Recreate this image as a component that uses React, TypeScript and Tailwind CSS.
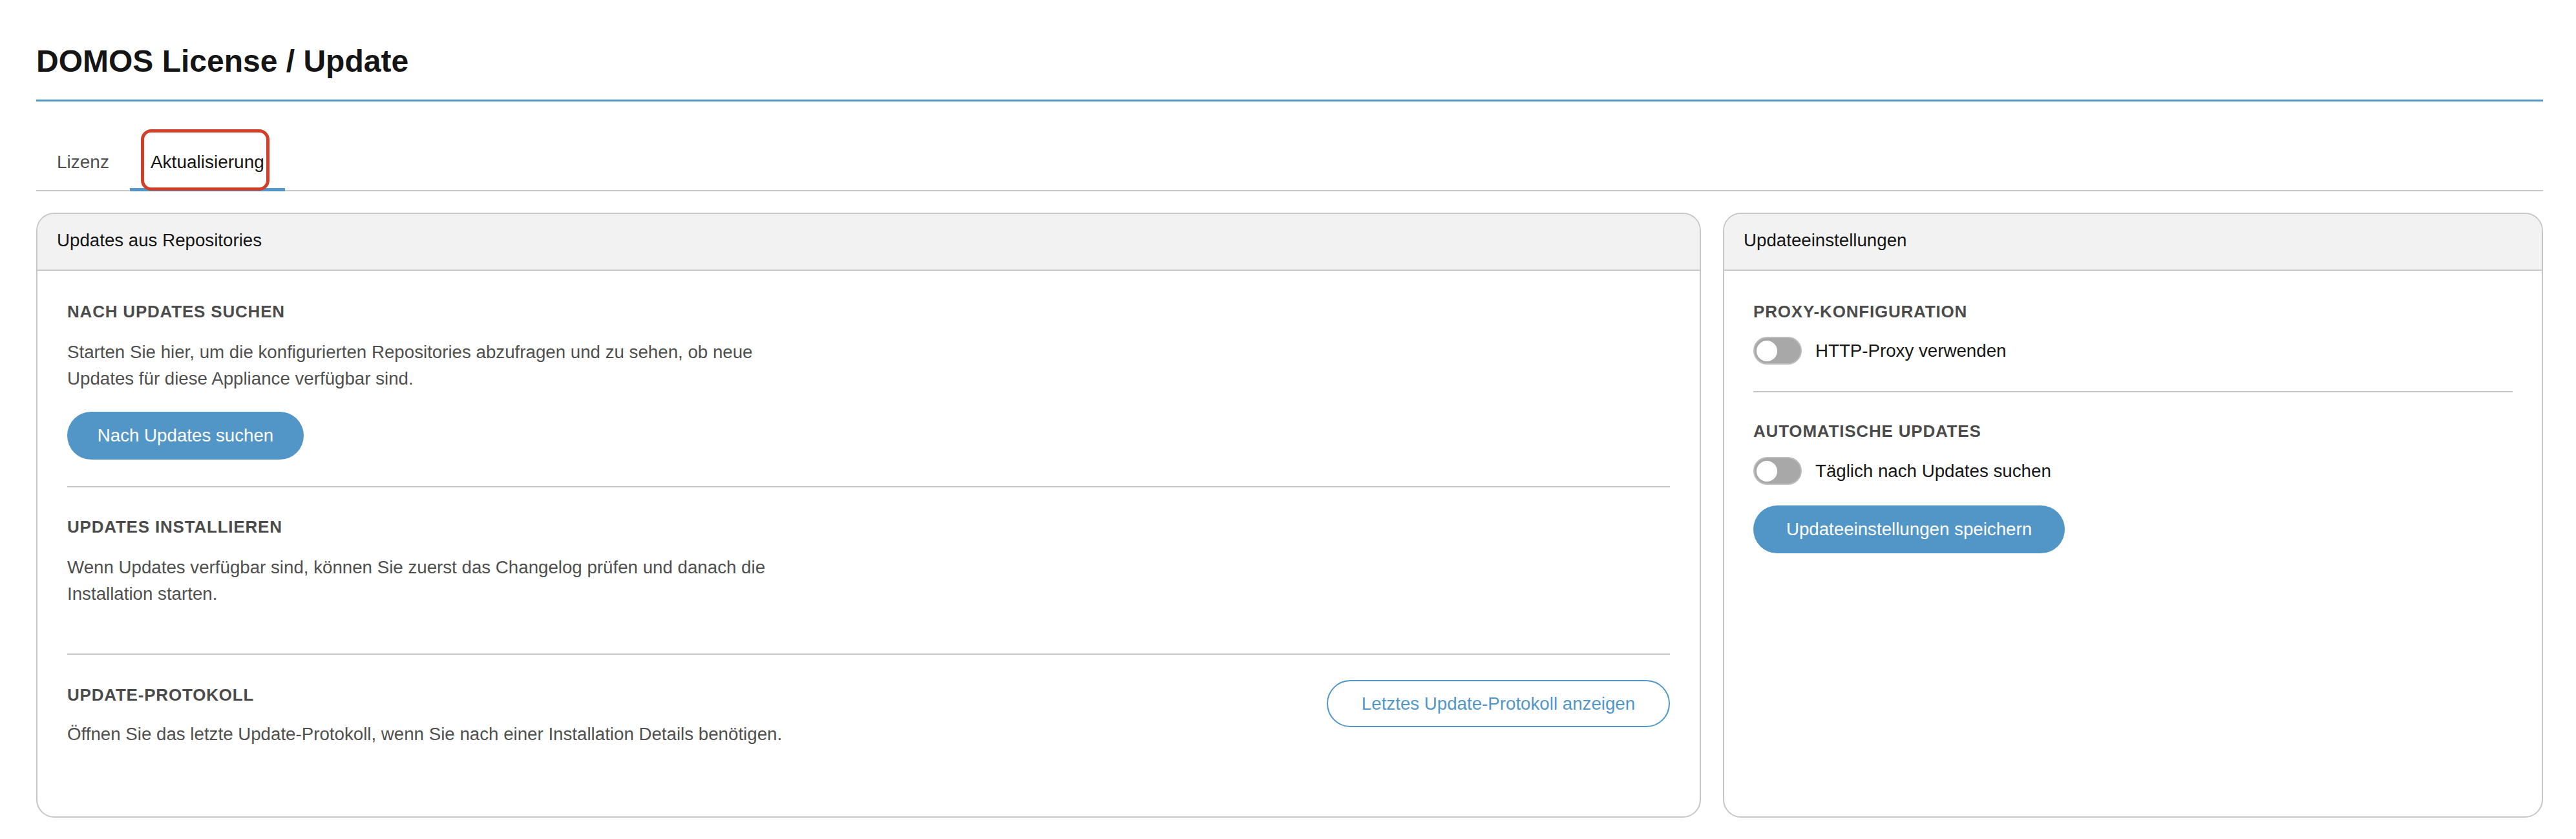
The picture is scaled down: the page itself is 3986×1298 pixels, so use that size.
import React from 'react';

const FONT = "font-['Liberation_Sans',Arial,sans-serif]";

const Toggle: React.FC<{ label: string }> = ({ label }) => (
  <div className="flex items-center gap-[21px]">
    <div className="flex h-[43px] w-[75px] items-center rounded-full border-2 border-[#bdbdbd] bg-[#a8a8a8] px-[3px]">
      <div className="h-[32px] w-[32px] rounded-full bg-white" />
    </div>
    <span className="text-[27.7px] leading-[42px] text-[#151515]">{label}</span>
  </div>
);

const SectionTitle: React.FC<{ children: React.ReactNode }> = ({ children }) => (
  <h3 className="text-[26px] font-bold uppercase leading-[32px] tracking-[0.8px] text-[#4b4b4b]">
    {children}
  </h3>
);

const Desc: React.FC<{ children: React.ReactNode }> = ({ children }) => (
  <p className="mt-[26px] max-w-[1110px] text-[27.7px] leading-[41px] text-[#4f4f4f]">{children}</p>
);

const CardHeader: React.FC<{ title: string }> = ({ title }) => (
  <div className="border-b-2 border-[#c7c7c7] bg-[#f2f2f2] px-[30px] pb-[24px] pt-[20px]">
    <h2 className="text-[27.7px] leading-[42px] text-[#151515]">{title}</h2>
  </div>
);

export default function App() {
  return (
    <div className={`min-h-screen w-full bg-white pl-[56px] pr-[51px] pt-[66px] ${FONT}`}>
      <h1 className="border-b-[3px] border-[#5296c8] pb-[30px] text-[48px] font-bold leading-[58px] text-[#151515]">
        DOMOS License / Update
      </h1>

      {/* tabs */}
      <div className="mt-[53px] flex border-b-2 border-[#c7c7c7]">
        <button className="-mb-[2px] border-b-[5px] border-transparent px-[32px] pb-[19px] pt-[20px] text-[28px] leading-[42px] text-[#4f4f4f]">
          Lizenz
        </button>
        <button className="relative -mb-[2px] border-b-[5px] border-[#5296c8] px-[32px] pb-[19px] pt-[20px] text-[28px] leading-[42px] text-[#151515]">
          Aktualisierung
          <span className="absolute left-[17px] top-[-10px] h-[95px] w-[199px] rounded-[16px] border-[5px] border-[#d13f28]" />
        </button>
      </div>

      <div className="mt-[33px] flex items-stretch gap-[34px]">
        {/* left card */}
        <div className="flex-1 overflow-hidden rounded-[28px] border-2 border-[#c7c7c7]">
          <CardHeader title="Updates aus Repositories" />
          <div className="px-[46px]">
            <div className="border-b-2 border-[#c7c7c7] pb-[41px] pt-[47px]">
              <SectionTitle>Nach Updates suchen</SectionTitle>
              <Desc>
                Starten Sie hier, um die konfigurierten Repositories abzufragen und zu sehen, ob neue Updates für diese
                Appliance verfügbar sind.
              </Desc>
              <button className="mt-[31px] h-[74px] w-[366px] rounded-full bg-[#5296c8] text-[27.7px] text-white">
                Nach Updates suchen
              </button>
            </div>
            <div className="border-b-2 border-[#c7c7c7] pb-[72px] pt-[45px]">
              <SectionTitle>Updates installieren</SectionTitle>
              <Desc>
                Wenn Updates verfügbar sind, können Sie zuerst das Changelog prüfen und danach die Installation
                starten.
              </Desc>
            </div>
            <div className="flex items-start justify-between pb-[107px] pt-[46px]">
              <div>
                <SectionTitle>Update-Protokoll</SectionTitle>
                <p className="mt-[24px] text-[27.7px] leading-[41px] text-[#4f4f4f]">
                  Öffnen Sie das letzte Update-Protokoll, wenn Sie nach einer Installation Details benötigen.
                </p>
              </div>
              <button className="-mt-[7px] h-[73px] w-[531px] rounded-full border-2 border-[#5296c8] bg-white text-[27.7px] text-[#5296c8]">
                Letztes Update-Protokoll anzeigen
              </button>
            </div>
          </div>
        </div>

        {/* right card */}
        <div className="w-[1269px] overflow-hidden rounded-[28px] border-2 border-[#c7c7c7]">
          <CardHeader title="Updateeinstellungen" />
          <div className="px-[45px] pt-[47px]">
            <SectionTitle>Proxy-Konfiguration</SectionTitle>
            <div className="mt-[23px]">
              <Toggle label="HTTP-Proxy verwenden" />
            </div>
            <div className="mt-[41px] border-t-2 border-[#c7c7c7]" />
            <div className="mt-[44px]">
              <SectionTitle>Automatische Updates</SectionTitle>
            </div>
            <div className="mt-[24px]">
              <Toggle label="Täglich nach Updates suchen" />
            </div>
            <button className="mt-[32px] h-[74px] w-[482px] rounded-full bg-[#5296c8] text-[27.7px] text-white">
              Updateeinstellungen speichern
            </button>
          </div>
        </div>
      </div>
    </div>
  );
}
